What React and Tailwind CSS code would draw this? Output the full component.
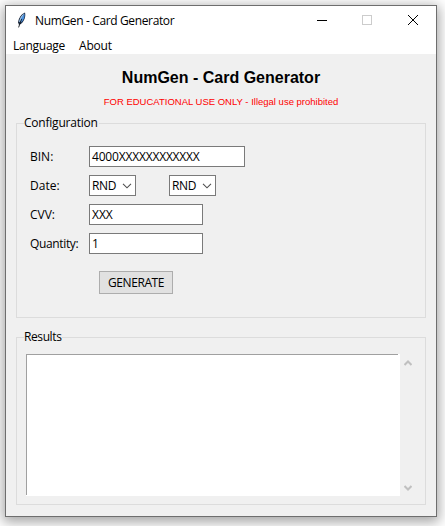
function Feather() {
  return (
    <svg width="16" height="16" viewBox="0 0 16 16">
      <path d="M11 0.5C7.5 2 4.6 6 4.1 10.2L5 13L7.4 11.6C10.2 9 12 4.5 11 0.5Z" fill="#152238" />
      <path d="M10.4 1.2C7.4 3.2 5.2 7 4.9 10.6L6.8 9Z" fill="#a8cdf0" />
      <path d="M10.5 1.4C11.1 5 9.4 8.8 6.4 11L7 6.6Z" fill="#4a90dd" />
      <path d="M7.6 7L4.6 15.4" stroke="#10151c" strokeWidth="0.9" />
    </svg>
  );
}

function Field({ label, children, labelClass = "" }) {
  return (
    <div className="flex h-[21px] items-center">
      <span className={`w-[59px] shrink-0 whitespace-nowrap leading-[16px] ${labelClass}`}>{label}</span>
      {children}
    </div>
  );
}

function Entry({ value, size }) {
  return <div className={`h-[21px] border border-[#7a7a7a] bg-white pl-[2px] leading-[19px] ${size}`}>{value}</div>;
}

function Combo() {
  return (
    <div className="flex h-[21px] w-[47px] items-center border border-[#7a7a7a] bg-white pl-[2px] leading-[19px]">
      <span className="w-[30px] tracking-[-0.4px]">RND</span>
      <svg width="10" height="6" viewBox="0 0 10 6" fill="none" stroke="#505050" strokeWidth="1.1">
        <path d="M1 .8L5 4.8L9 .8" />
      </svg>
    </div>
  );
}

function Panel({ title, className, titleClass, children }) {
  return (
    <section className={`relative border border-[#dcdcdc] ${className}`}>
      <h2 className={`absolute left-[7px] top-[-9px] bg-[#f0f0f0] pr-px leading-[16px] ${titleClass}`}>{title}</h2>
      {children}
    </section>
  );
}

export default function App() {
  return (
    <div className="h-[526px] w-[445px] overflow-hidden bg-white p-[5px] font-['Open_Sans','Noto_Sans',sans-serif] text-[12px] text-black">
      <main className="flex h-[512px] w-[432px] flex-col border border-[#6e6e6e] bg-[#f0f0f0] shadow-[0_3px_12px_2px_rgba(0,0,0,0.36)]">
        <header className="flex h-[31px] shrink-0 items-center bg-white">
          <div className="ml-[8px] mt-[-3px]"><Feather /></div>
          <span className="ml-[5px] mt-[-1px] grow whitespace-nowrap leading-[16px] tracking-[-0.36px]">NumGen - Card Generator</span>
          <svg className="mr-[5px] mt-[-3px]" width="140" height="16" viewBox="0 0 140 16" fill="none" shapeRendering="crispEdges">
            <path d="M26 8.5H36" stroke="#000" />
            <rect x="71.5" y="3.5" width="9" height="9" stroke="#ccc" />
            <path d="M117 3L127 13M127 3L117 13" stroke="#000" shapeRendering="auto" />
          </svg>
        </header>
        <nav className="flex h-[17px] shrink-0 bg-white pl-[7px] leading-[18px]">
          <span className="w-[66px] tracking-[-0.25px]">Language</span>
          <span className="tracking-[-0.2px]">About</span>
        </nav>
        <h1 className="mt-[14px] text-center font-['Liberation_Sans',Arial,sans-serif] text-[16px] font-bold leading-[20px]">NumGen - Card Generator</h1>
        <p className="mt-[7px] text-center font-['Liberation_Sans',Arial,sans-serif] text-[9.5px] leading-[14px] text-[#ff0000]">FOR EDUCATIONAL USE ONLY - Illegal use prohibited</p>
        <Panel title="Configuration" className="ml-[10px] mt-[14px] h-[195px] w-[410px] shrink-0 pl-[13px] pt-[22px]" titleClass="tracking-[-0.22px]">
          <div className="flex flex-col gap-[8px]">
            <Field label="BIN:"><Entry value="4000XXXXXXXXXXXX" size="w-[156px] tracking-[-0.19px]" /></Field>
            <Field label="Date:"><div className="flex gap-[33px]"><Combo /><Combo /></div></Field>
            <Field label="CVV:"><Entry value="XXX" size="w-[114px]" /></Field>
            <Field label="Quantity:" labelClass="tracking-[-0.35px]"><Entry value="1" size="w-[114px]" /></Field>
          </div>
          <button className="ml-[69px] mt-[17px] block h-[23px] w-[74px] border border-[#adadad] bg-[#e1e1e1] leading-[21px] tracking-[-0.4px]">GENERATE</button>
        </Panel>
        <Panel title="Results" className="ml-[10px] mt-[19px] h-[168px] w-[410px] shrink-0 pl-[9px] pt-[16px]" titleClass="tracking-[-0.4px]">
          <div className="flex h-[142px]">
            <div className="w-[374px] bg-white pb-px pr-[2px]"><div className="h-full border-l border-t border-[#a0a0a0]" /></div>
            <div className="flex w-[15px] flex-col items-center justify-between pb-[5px] pt-[6px]">
              <svg width="8" height="6" viewBox="0 0 8 6" fill="none" stroke="#c0c0c0" strokeWidth="2"><path d="M.5 5L4 1.5L7.5 5" /></svg>
              <svg width="8" height="6" viewBox="0 0 8 6" fill="none" stroke="#c0c0c0" strokeWidth="2"><path d="M.5 1L4 4.5L7.5 1" /></svg>
            </div>
          </div>
        </Panel>
      </main>
    </div>
  );
}
